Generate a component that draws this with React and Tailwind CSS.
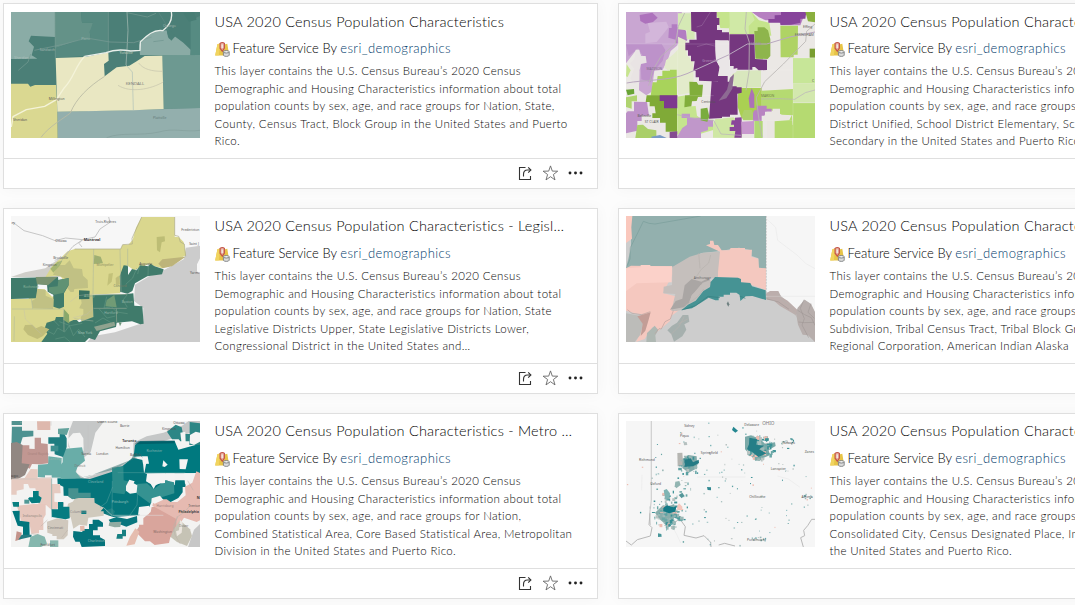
import React from "react";

const Shapes = ({ items }) => items.map(([fill, points], i) => <polygon key={i} fill={fill} points={points} />);

const Lines = ({ items }) =>
  items.map(([stroke, width, d], i) => <path key={i} d={d} fill="none" stroke={stroke} strokeWidth={width} strokeLinejoin="round" />);

const Labels = ({ items }) =>
  items.map(([x, y, text, fill = "#555", size = 10, weight = 400], i) => (
    <text key={i} x={x} y={y} fill={fill} fontSize={size} fontWeight={weight} textAnchor="middle" fontFamily="Noto Sans, sans-serif">
      {text}
    </text>
  ));

const Thumb = ({ top = 33, children }) => (
  <svg className="block h-[126px] w-[189px] shrink-0" viewBox={`33 ${top} 567 378`} preserveAspectRatio="none">
    {children}
  </svg>
);

const CountyMap = () => (
  <Thumb top={36}>
    <rect x="33" y="36" width="567" height="378" fill="#4b7f77" />
    <Shapes
      items={[
        ["#8aaca6", "33,36 165,36 165,111 93,107 86,124 102,140 95,166 112,176 33,177"],
        ["#649288", "165,36 243,36 246,68 279,68 276,86 269,95 272,115 240,119 165,145"],
        ["#568980", "243,36 325,36 325,155 255,168 165,173 165,145 240,119 272,115 269,95 279,68 246,68"],
        ["#8aaba5", "420,165 418,134 440,107 467,96 500,91 507,116 523,108 550,128 572,149 571,168"],
        ["#6d9991", "487,166 600,165 600,325 491,327"],
        ["#568b82", "572,60 600,50 600,165 572,165"],
        ["#93afad", "172,335 400,330 600,324 600,414 173,414"],
        ["#dad891", "33,251 84,251 91,260 105,255 168,255 172,334 173,414 33,414"],
        ["#e9e7c2", "167,174 255,171 325,157 326,182 312,192 314,229 350,202 388,197 410,184 434,168 487,167 491,327 400,331 172,335"],
      ]}
    />
    <Lines
      items={[
        ["#adc0b8", 2, "M381 36 L384 91 L381 149 L378 195 L397 216 L400 330"],
        ["#7a9c96", 2, "M103 151 L190 133 L260 114 L330 126 L401 128 L455 111"],
        ["#759c93", 2, "M381 38 L442 51 L468 40 M325 36 L325 156 M165 36 L166 174 M55 211 L84 186 L92 162"],
        ["#b8b9a3", 2.5, "M314 229 C265 260 228 296 211 339 C190 356 147 379 123 412"],
        ["#c4c2ac", 2, "M416 189 C430 208 455 214 488 214 M354 256 C390 279 450 269 490 246"],
        ["#839f9c", 2, "M320 413 C365 395 420 409 477 396 C520 383 552 397 600 391"],
        ["#e9efea", 4, "M514 36 C518 58 507 78 488 92 C460 88 440 107 421 126 L420 151 L392 153 C360 147 335 151 318 158 L254 169"],
        ["#f4f3d9", 4, "M254 169 C227 196 220 237 193 263 L169 299 L134 319 L79 329 L39 350 L34 381"],
        ["#658c86", 1.5, "M476 37 L495 68 L506 96 M460 125 L491 121 M573 62 L600 49"],
      ]}
    />
    <polygon points="500,91 513,94 526,109 514,122 504,111" fill="#4b7f77" />
    <polygon points="550,40 582,37 590,59 567,65" fill="#477d74" />
    <Labels items={[[142, 153, "Sandwich", "#a2b7b1"], [64, 176, "Sheridan", "#b2c2bd"], [257, 121, "Plano", "#9bb4ad"], [378, 163, "Yorkville", "#c6d0bf"], [508, 82, "Oswego", "#a2b7b1"], [405, 254, "KENDALL", "#777", 13], [170, 300, "Millington"], [60, 363, "Sheridan"], [479, 358, "Plattville", "#647b78"]]} />
  </Thumb>
);

const SchoolMap = () => (
  <Thumb top={36}>
    <rect x="33" y="36" width="567" height="378" fill="#ebe8e5" />
    <Shapes
      items={[
        ["#c9a6d2", "33,36 200,36 206,65 190,80 188,135 167,153 159,178 143,209 118,212 110,275 94,286 72,271 73,213 62,192 78,165 63,151 33,190"],
        ["#bd92ca", "33,132 140,132 151,150 143,182 117,213 107,247 79,238 77,192 88,175 69,145 41,169"],
        ["#d3b6da", "98,69 154,65 161,81 143,104 125,126 91,130 91,101 105,95"],
        ["#e9e4e4", "62,149 73,149 77,168 92,168 95,188 78,192 73,213 73,248 58,252 46,235 58,206 45,191 58,176"],
        ["#ad72bc", "74,45 112,38 128,53 114,66 91,71 76,63"],
        ["#b27dc2", "162,84 170,84 170,73 187,73 187,82 204,82 213,93 217,120 203,132 182,130 182,119 160,113"],
        ["#e3ebcb", "189,110 212,121 215,165 234,184 236,241 225,278 190,285 185,229 148,203 153,181 176,162 190,148"],
        ["#d5e9b5", "189,40 230,40 230,92 239,92 239,118 215,118 215,91 189,88"],
        ["#c5e48c", "303,36 409,36 432,61 463,68 469,107 420,103 343,103 342,85 316,84"],
        ["#d0e9a6", "343,36 409,36 419,60 401,78 402,102 345,100"],
        ["#b67fc1", "410,36 600,36 569,43 556,76 497,76 491,59 452,61 432,52"],
        ["#87449b", "498,36 574,36 571,56 556,56 556,68 528,74 497,75 496,68 460,68 460,57 479,57 479,46 498,45"],
        ["#afd364", "496,77 549,77 548,164 536,164 536,172 497,172"],
        ["#8aaf3e", "571,36 600,36 600,67 579,64"],
        ["#c7e698", "534,174 600,174 600,250 534,250"],
        ["#d3e8ae", "534,250 600,250 600,308 534,308"],
        ["#b5da71", "440,272 534,267 534,346 501,344 467,330 440,325"],
        ["#b5da71", "534,309 600,309 600,375 534,375"],
        ["#d9e7be", "350,213 438,211 438,262 357,264"],
        ["#aad052", "370,264 440,264 440,329 406,356 379,353 368,321"],
        ["#c7e58f", "35,193 47,211 38,231 33,229"],
        ["#a8d35b", "128,228 142,228 142,212 165,212 165,209 185,209 186,286 107,287 113,247 125,247"],
        ["#80aa37", "95,286 187,286 186,395 152,395 152,368 135,368 135,354 112,354 112,340 122,340 119,319 104,319 104,306 92,306"],
        ["#c5e58e", "187,290 211,286 211,320 242,318 246,347 265,361 295,359 295,390 232,409 186,403"],
        ["#81ae3b", "223,245 245,246 250,254 264,254 261,290 249,291 245,303 231,304 229,319 208,322 210,286 224,285"],
        ["#c097ca", "200,341 225,341 225,353 265,353 265,359 294,361 294,380 279,380 279,391 258,397 258,414 184,414 202,384 216,374 216,354 200,354"],
        ["#7d398e", "134,286 187,286 187,325 147,325 147,303 134,303"],
        ["#bd91c8", "38,334 57,334 57,305 96,306 102,347 80,347 80,363 67,363 67,392 33,400 33,340"],
        ["#69a435", "33,269 57,267 58,281 38,286"],
        ["#b0d470", "33,292 66,286 66,304 50,304 50,326 33,321"],
        ["#aacf68", "67,375 84,374 99,387 124,391 124,414 61,414"],
        ["#cfe7a4", "300,358 356,352 381,378 380,414 294,413 294,375"],
        ["#75377f", "228,36 305,36 305,54 313,54 313,75 306,75 306,90 321,90 321,97 342,97 343,120 333,126 301,120 301,150 303,180 314,201 309,226 309,244 290,244 252,242 252,232 242,232 242,213 235,213 239,184 228,184 228,167 219,167 219,151 211,151 211,128 223,128 223,119 245,119 244,97 229,92"],
        ["#75377f", "343,103 418,103 420,177 456,179 456,210 431,211 420,201 412,201 412,209 367,209 367,204 345,209 343,157"],
        ["#75377f", "290,243 309,244 309,228 338,228 338,245 351,245 351,259 365,259 365,262 380,262 380,278 367,281 368,344 345,344 345,350 321,350 321,354 282,356 286,300"],
        ["#eae6e7", "301,121 339,121 342,149 336,171 345,181 345,198 356,198 356,210 364,210 364,216 342,227 313,226 314,201 303,180"],
        ["#8a469a", "350,361 360,361 360,353 380,352 380,413 358,413 361,393 344,393 344,381 357,381 357,374 348,374"],
        ["#8eb54c", "418,93 428,93 428,82 448,82 459,91 466,117 466,168 458,177 421,176"],
        ["#7aac3d", "257,326 277,323 283,350 277,365 257,361"],
        ["#ac71b7", "410,265 418,284 418,324 404,323 401,295"],
        ["#b883c1", "418,331 425,331 425,317 455,317 455,326 470,326 470,335 450,335 450,347 440,347 440,365 414,362 410,347"],
        ["#eae6e2", "449,345 455,335 473,335 473,326 495,326 495,345 522,346 522,362 479,362 479,414 456,414 456,364 443,363"],
        ["#b5da71", "479,364 523,360 531,344 533,375 600,375 600,414 479,414"],
        ["#b1d875", "418,363 443,363 443,414 418,414"],
        ["#c898ce", "379,365 417,363 417,402 381,402"],
        ["#aed06c", "387,330 410,330 414,338 414,361 385,361 379,350"],
        ["#7a9ac5", "109,410 135,405 155,414 110,414"],
        ["#844a91", "164,396 187,394 187,414 164,414"],
        ["#799e30", "584,146 600,146 600,173 584,173"],
      ]}
    />
    <Lines
      items={[
        ["#b9a8bf", 3, "M35 249 C86 239 165 243 216 221 L340 165 L397 132 L455 132 L524 111 L600 96"],
        ["#b9b6b3", 2.5, "M394 36 L390 87 L403 127 L402 215 L393 271 M601 71 L575 94 L572 124 L505 192 L449 245 L424 293 L430 345 L441 411 M209 39 L190 79 L181 131 L138 169 L112 213 L101 257"],
        ["#baafbc", 2, "M438 297 L491 296 L539 298 L571 278 L600 270 M186 344 L247 357 L296 361 L318 402 L378 406"],
        ["#ffffff70", 1, "M188 36 V414 M343 80 V210 M33 132 H343 M186 287 H296 M534 174 H600 M457 210 H534 M534 251 V414 M534 309 H600 M381 361 H534 M246 140 L274 132 L303 139 M286 36 L261 76 L245 81"],
      ]}
    />
    <path d="M357 222 L345 233 L336 269 L311 302 L334 295 L352 266 Z" fill="#8d6a93" />
    <Labels items={[[118, 211, "MADISON", "#806b86"], [285, 186, "Greenville", "#b395bb"], [422, 136, "SALEM", "#a18fab"], [280, 310, "Centralia"], [458, 291, "MARION", "#718149"], [110, 370, "ST CLAIR"], [88, 352, "Belleville"], [568, 107, "EFFINGHAM", "#666", 10], [578, 83, "Effing"], [594, 245, "C"]]} />
  </Thumb>
);

const NewEnglandMap = () => (
  <Thumb>
    <rect x="33" y="33" width="567" height="378" fill="#f7f7f7" />
    <Shapes
      items={[
        ["#cccccc", "558,128 600,122 600,160 591,178 591,199 600,208 600,411 262,411 277,394 345,382 428,354 430,309 402,288 405,239 449,213 494,194 552,162"],
        ["#d0cfca", "33,216 75,202 136,190 175,163 190,171 187,214 175,216"],
        ["#dad78e", "33,281 85,282 112,252 134,253 156,275 192,262 202,240 179,211 136,217 155,185 203,139 224,132 362,132 368,119 385,119 398,105 408,68 425,36 524,36 524,95 537,97 551,111 558,151 486,190 445,178 402,196 381,181 370,190 360,238 361,265 276,269 281,349 238,343 193,369 132,411 33,411"],
        ["#c1c184", "159,209 175,180 195,180 209,166 221,190 246,192 249,212 263,225 264,249 223,252 219,269 199,246 202,223 180,214"],
        ["#c1c184", "234,271 282,269 280,342 244,349 239,319"],
        ["#407b6b", "33,219 174,216 175,225 206,219 206,241 192,265 192,305 178,311 160,305 160,269 143,260 141,239 113,238 110,280 33,282"],
        ["#c1c184", "112,251 137,255 137,272 161,282 159,312 98,310 95,288 107,281"],
        ["#407b6b", "360,238 359,213 371,181 384,182 384,210 396,192 410,196 421,181 445,184 451,176 464,184 491,193 486,208 442,214 405,235 397,258 382,266 360,260"],
        ["#407b6b", "278,270 381,267 400,265 403,302 427,304 431,356 421,358 396,349 350,353 348,366 300,379 285,405 267,399 255,411 124,411 142,386 133,373 140,353 165,346 168,336 191,336 207,351 227,342 237,352 280,336"],
        ["#5f9274", "175,225 205,220 205,241 191,263 163,269 147,260 147,247 173,244"],
        ["#dad78e", "195,271 203,261 240,261 245,295 237,310 250,312 250,328 234,345 215,345 207,326 195,321"],
        ["#c0bd7a", "70,373 75,360 97,359 108,370 124,363 148,373 129,393 112,402 84,390"],
        ["#89a86b", "192,313 207,329 208,356 190,344"],
        ["#9faf72", "283,150 302,155 309,175 281,177"],
        ["#bdbd75", "470,96 494,94 495,109 485,112 480,142 471,136"],
        ["#bdb47a", "487,163 557,155 516,184 488,190 475,176"],
        ["#a6b572", "151,191 172,171 187,167 179,182 160,203"],
        ["#7a9270", "107,216 173,215 144,241 111,237"],
        ["#387061", "237,256 269,257 268,282 237,283"],
        ["#719b75", "320,285 343,270 350,307 316,304"],
        ["#8fa38f", "282,365 343,350 346,362 290,378"],
        ["#699276", "356,351 365,353 360,364"],
        ["#c3c179", "326,206 339,204 335,230 322,242"],
        ["#c0bd7a", "347,219 356,212 360,238 348,242"],
      ]}
    />
    <Lines
      items={[
        ["#a9b59f", 1.5, "M279 267 L281 132 M276 270 L381 268 M281 310 H380 M349 311 L350 352 M36 312 H191 L192 380 M43 334 L42 408 M360 133 L363 262 M383 131 V185 M205 140 L173 182 M94 281 L98 311 M280 348 L223 341"],
        ["#bcbcbc", 2.5, "M39 52 L72 77 L128 92 L165 107 L197 99 L248 104 M326 36 L330 52 L300 72 L285 96 L248 104 L219 124 L191 157 L164 166 M248 104 L237 115 L246 126"],
        ["#6b9c89", 1.5, "M144 379 L162 388 L173 369 L194 381 L208 362 L220 392 L236 373 L255 396 M178 350 L211 362 L247 355 M285 354 L309 339 L338 356 M320 275 L312 309 L331 306 M329 300 L350 321 L383 326 M385 265 L369 285 L382 307 M166 402 L193 396 L211 411 M410 190 L398 219 L377 238 M420 178 L413 207 M445 178 L444 212 M178 363 L163 348 M297 311 L321 339 L346 333"],
        ["#bebdb5", 1, "M72 313 L76 342 L125 388 M280 310 L260 328 L219 338 M278 267 L234 272 L211 290"],
      ]}
    />
    <path d="M224 132 H362 L368 119 L397 117 L396 100 L425 36 M524 36 V91 L536 94 L541 111 L553 117 L557 154" fill="none" stroke="#aaa985" strokeWidth="2" />
    <Labels items={[[317, 55, "Trois-Rivières"], [183, 112, "Ottawa"], [276, 107, "Montreal", "#333", 11, 700], [182, 162, "Brockville"], [149, 184, "Kingston"], [315, 183, "Montpelier", "#8c8c62"], [360, 245, "Concord", "#777c66"], [437, 179, "Augusta"], [571, 78, "Fredericton"], [582, 121, "Saint J"], [585, 207, "Yarmo"], [93, 248, "Rochester", "#8db49c"], [268, 277, "Albany", "#8eb398"], [382, 293, "Boston", "#9dbaad"], [333, 327, "Hartford", "#94b6a8"], [255, 388, "New York", "#a1c0b4"], [40, 58, "ey"]]} />
  </Thumb>
);

const AlaskaMap = () => (
  <Thumb>
    <rect x="33" y="33" width="567" height="378" fill="#cdcdcd" />
    <Shapes
      items={[
        ["#f6f6f6", "454,33 600,33 600,323 588,297 568,284 545,316 491,266 454,262"],
        ["#93b0ae", "48,33 453,33 453,192 430,190 430,160 410,153 409,136 372,128 317,138 260,144 189,178 171,188 33,190 48,129"],
        ["#f5c8bf", "33,190 48,182 172,184 173,208 144,264 190,276 190,317 170,332 165,348 131,377 113,366 89,402 63,411 80,375 98,331 60,325 33,317"],
        ["#fbd1c9", "33,190 77,187 77,180 106,180 106,184 171,184 170,232 65,235 33,259"],
        ["#fac8bd", "33,33 52,33 49,67 51,101 33,114"],
        ["#f4c8bf", "273,121 285,117 285,107 295,107 298,120 309,120 320,136 343,136 347,129 390,129 390,134 411,134 409,155 430,161 432,188 453,190 453,255 404,238 375,230 370,218 303,217 309,202 308,154 315,140"],
        ["#c5bfbc", "172,186 224,155 265,143 315,140 309,201 309,216 284,221 282,242 262,258 238,293 207,313 185,318 169,318 181,267 145,265 146,245 171,240"],
        ["#aaa6a4", "230,222 259,230 282,218 288,235 257,240 229,273 225,292 206,307 165,314 182,288 202,281 209,241"],
        ["#c3bdba", "263,233 286,225 287,244 261,260 235,292 220,298 231,269 244,259"],
        ["#469394", "200,315 219,299 242,287 265,258 285,246 287,231 300,216 369,218 378,222 378,232 406,234 411,244 452,256 453,285 412,273 392,274 376,288 374,270 364,263 345,263 345,269 326,269 326,275 311,275 311,286 301,286 281,278 260,292 231,310"],
        ["#bcaeac", "454,265 465,258 490,258 499,276 518,287 550,317 543,331 494,302 477,287 455,284"],
        ["#b7aeac", "543,324 548,308 569,284 588,297 600,321 600,411 579,391 563,389 549,359"],
        ["#a6b0ae", "157,376 171,362 186,353 203,330 220,330 223,350 208,358 214,374 202,394 177,410 169,388"],
        ["#bcbcb9", "33,325 78,333 84,355 76,389 59,411 33,411"],
        ["#c39d96", "67,334 107,322 99,351 91,377 77,393 83,356"],
        ["#afb8b3", "96,384 119,362 130,375 121,391 123,411 94,411"],
        ["#6e8080", "335,296 339,289 343,298 340,305"],
      ]}
    />
    <Lines
      items={[
        ["#789d9a", 2, "M37 182 L45 162 L46 128 L70 80 L85 49 L102 55 L120 57 L189 45 L257 33"],
        ["#b7b2ae", 2, "M287 150 L281 174 L258 194 L240 221 M251 144 L255 190 M212 300 L223 293 L250 274 L266 252 M208 334 L192 365 L168 388 M218 342 L188 358 M485 261 L501 286 L527 303 L541 329 L557 347 L597 353"],
        ["#9b9391", 1.5, "M548 316 L569 329 L589 338 L600 361 M567 284 L556 310 L568 341 L561 360 L581 398 M588 296 L579 322 L598 340 M550 351 L568 353 L597 352 M454 281 L491 291 L522 313"],
        ["#dfdfdf", 1, "M454 41 L468 54 L482 67 L488 106 L509 122 L546 150 L573 176 L600 191 M454 274 H600"],
        ["#357f80", 2, "M200 315 L242 302 L279 274 L315 278 M374 273 L391 280"],
        ["#b9a39e", 2, "M37 314 L51 325 L80 329 L106 320 M175 317 L166 342 L150 350 L139 372 L132 371 L120 386"],
      ]}
    />
    <path d="M454 33V282" stroke="#999" strokeWidth="1" strokeDasharray="5 4" />
    <Labels items={[[262, 222, "Anchorage", "#666"]]} />
  </Thumb>
);

const MetroMap = () => (
  <Thumb>
    <rect x="33" y="33" width="567" height="378" fill="#f3f3f2" />
    <Shapes
      items={[
        ["#c5c7c7", "219,33 313,33 286,68 272,127 251,143 230,168 229,189 253,205 330,178 400,150 400,98 440,79 490,68 546,47 566,33 600,33 600,60 528,82 453,105 405,127 412,152 351,183 267,214 231,212 215,187 237,138 205,110 206,67"],
        ["#f3f3f2", "203,88 219,70 240,68 250,85 251,122 211,120"],
        ["#c7c7c7", "582,359 600,342 600,411 564,411"],
        ["#00797f", "405,105 420,94 524,93 535,119 600,101 600,189 433,190 439,158 424,139 401,140"],
        ["#05757b", "172,205 240,205 270,207 353,180 398,143 428,150 432,188 456,198 440,213 464,227 500,210 524,226 526,211 555,211 557,231 548,231 548,247 535,264 512,276 454,276 448,291 422,291 418,316 339,321 292,304 292,289 270,279 213,265 210,258 191,257 190,230 173,222"],
        ["#2b8b8a", "336,173 370,168 371,211 389,215 373,253 338,248"],
        ["#359291", "410,222 441,220 461,238 496,211 522,217 523,250 475,265 449,280 410,251"],
        ["#2c8685", "501,65 527,44 545,52 549,72 569,72 569,36 600,40 600,105 568,105 568,94 541,94 536,88 516,88"],
        ["#69ada8", "188,117 246,112 255,152 233,170 227,185 243,205 183,207 175,174 188,157"],
        ["#69ada8", "114,164 144,162 145,139 185,144 183,203 155,203 155,196 135,196 135,203 113,201"],
        ["#1d7d80", "145,82 179,82 179,70 192,70 200,85 200,111 189,141 164,133 163,101 145,101"],
        ["#4d9291", "36,50 66,50 66,62 100,62 100,79 68,82 55,124 34,116"],
        ["#c19792", "60,106 88,106 88,116 104,117 104,83 123,83 123,100 143,102 145,160 120,163 96,162 89,176 56,159 58,130"],
        ["#918782", "33,99 50,96 68,105 65,160 89,163 75,195 53,208 33,209"],
        ["#deb8ad", "111,34 151,34 151,60 112,60"],
        ["#e6cbc1", "92,177 113,178 113,204 155,202 155,222 180,222 182,250 163,250 163,275 192,279 189,290 156,301 138,285 116,284 106,235 89,235 84,222 71,222 71,238 50,242 50,254 34,254 34,207 74,204"],
        ["#e6c7bd", "50,287 101,282 137,282 137,314 130,326 130,360 117,360 117,370 94,371 89,343 63,332 56,304"],
        ["#d0cabd", "204,281 218,275 227,263 283,264 284,278 311,293 302,304 311,304 311,317 265,323 261,347 238,344 220,356 212,321 196,329"],
        ["#d0c8bd", "141,335 172,325 205,331 203,376 191,388 170,388 170,378 157,378 157,373 142,368"],
        ["#057c81", "155,298 174,298 174,276 190,276 190,290 208,290 209,325 196,328 156,321"],
        ["#057d80", "88,262 99,262 99,243 116,243 116,257 125,263 120,278 95,280 84,266"],
        ["#05747c", "220,363 247,366 247,357 267,357 267,342 278,342 278,329 296,329 309,338 309,350 293,350 293,361 279,361 279,376 300,376 300,382 315,390 315,408 245,411 239,395 226,395 219,380"],
        ["#0a767e", "326,329 349,321 381,327 411,318 412,337 379,350 363,344 337,348"],
        ["#178082", "352,372 366,372 366,359 378,359 378,379 368,379 368,386 349,386"],
        ["#00767d", "37,303 59,302 59,332 88,336 89,377 69,376 69,350 53,347"],
        ["#85b7ae", "91,381 113,372 134,380 141,401 123,411 85,411"],
        ["#8bb9b0", "150,391 175,391 175,411 150,411"],
        ["#d9a59c", "407,365 417,350 417,344 430,344 430,325 452,306 455,291 473,289 505,291 530,320 532,365 511,382 507,399 464,405 450,394 435,394"],
        ["#e6bab1", "457,287 462,268 500,268 512,276 532,276 557,256 555,230 577,218 589,184 600,189 600,331 590,336 552,323 529,358 529,327"],
        ["#c6c3b5", "520,360 540,331 570,358 576,378 561,408 531,396 512,381"],
        ["#e5bdaf", "379,407 390,380 406,355 418,365 404,403"],
        ["#c3938a", "50,364 65,368 62,388 46,393"],
        ["#247d82", "65,374 95,374 94,380 55,389"],
        ["#0a8081", "37,276 57,276 57,290 40,290"],
        ["#4f9895", "73,269 88,269 88,281 73,281"],
        ["#63a29c", "174,56 208,54 200,75 174,72"],
        ["#f4f4f3", "426,139 443,139 447,161 429,162"],
        ["#f4f4f3", "378,228 388,209 404,214 401,220 412,226 410,248 390,251 378,242"],
        ["#f4f4f3", "441,192 495,190 495,219 469,221 461,237 452,222 438,214"],
        ["#f4f4f3", "497,190 524,190 523,211 497,211"],
        ["#f4f4f3", "538,148 564,148 557,178 539,177"],
        ["#f4f4f3", "490,151 503,164 494,171 487,169"],
        ["#f4f4f3", "417,291 448,287 446,313 414,314"],
        ["#f4f4f3", "455,265 480,257 490,269 464,281 454,276"],
        ["#f4f4f3", "541,68 556,65 557,97 545,102"],
        ["#f4f4f3", "570,75 587,65 600,68 600,95 582,105 569,100"],
        ["#f4f4f3", "552,190 572,192 572,215 555,222"],
        ["#e3b9ac", "240,348 253,347 254,362 241,363"],
        ["#91aba2", "328,337 364,335 361,351 344,352 326,347"],
        ["#ece6df", "540,330 548,337 545,368 531,379 528,364 537,361"],
        ["#46918f", "205,235 235,235 235,248 272,248 272,263 240,263 218,268 205,260"],
        ["#1f8083", "318,301 335,295 345,304 340,317 321,315"],
        ["#0b7d81", "244,302 259,302 259,312 244,312"],
        ["#51928f", "35,33 66,33 66,45 35,45"],
        ["#3d9090", "152,107 175,107 175,124 152,124"],
      ]}
    />
    <Lines
      items={[
        ["#c3c3c3", 1.5, "M265 45 V115 M153 34 V47 M63 35 V40 M36 207 H113"],
        ["#56a09e", 1.5, "M337 213 L336 317 M353 188 H556 M414 240 L411 285 L388 318 M338 231 L320 277 L300 292 M155 205 V322"],
        ["#dedede", 1.5, "M339 316 H490 M310 292 L338 318 M113 204 H172"],
        ["#bbb0a8", 1.5, "M570 287 L553 307 L533 320 L520 349 L525 375 L541 402 M532 318 L520 366 M563 212 L580 241 M142 330 L122 349 M203 360 L185 383 M94 371 L112 374"],
      ]}
    />
    <polygon points="235,205 336,180 405,145 401,129 394,149 330,174 268,198" fill="#56868599" />
    <polygon points="414,93 524,91 524,100 403,103" fill="#00434f70" />
    <Labels items={[[322, 40, "Owen Sound"], [374, 51, "Barrie"], [388, 96, "Toronto", "#444", 11, 700], [368, 117, "Hamilton"], [307, 134, "London"], [407, 138, "Buffalo"], [259, 134, "Sarnia"], [463, 125, "Rochester", "#8bb5b2"], [240, 171, "Detroit", "#777"], [114, 134, "Grand Rapids", "#a9857f"], [165, 150, "Lansing", "#93b9ae"], [287, 220, "Cleveland", "#83b5b3"], [360, 280, "Pittsburgh", "#9bc0be"], [234, 308, "Columbus", "#888"], [166, 356, "Cincinnati", "#777"], [97, 320, "Indianapolis", "#94877f"], [495, 291, "Harrisburg", "#9e807b"], [566, 309, "Philadelphia", "#444", 10, 700], [488, 368, "Washington", "#876b66"], [551, 352, "Dover", "#777"], [583, 292, "Trenton"], [289, 397, "Charleston", "#99bbb8"], [143, 407, "Frankfort"], [44, 200, "ago", "#444", 12], [507, 60, "Kingston"], [537, 41, "Ottawa"], [595, 266, "N", "#333", 11, 700]]} />
  </Thumb>
);

const cluster = (cx, cy, rx, ry, count, seed, size) => {
  let state = seed;
  const next = () => {
    state = (state * 16807) % 2147483647;
    return state / 2147483647;
  };
  return Array.from({ length: count }, () => {
    const angle = next() * Math.PI * 2;
    const radius = Math.sqrt(next());
    return { x: cx + Math.cos(angle) * rx * radius, y: cy + Math.sin(angle) * ry * radius, w: 2 + next() * size, h: 2 + next() * size, tone: next() };
  });
};

const tones = ["#3a9195", "#6ba7a6", "#9bb8b6", "#b9c3c1", "#5da1a2"];
const places = [
  ...cluster(316, 222, 283, 188, 130, 381, 3),
  ...cluster(160, 305, 62, 44, 50, 99, 8),
  ...cluster(162, 320, 34, 30, 36, 91, 11),
  ...cluster(220, 160, 36, 28, 26, 118, 9),
  ...cluster(430, 112, 44, 38, 60, 213, 11),
  ...cluster(200, 225, 34, 40, 14, 31, 7),
  ...cluster(158, 262, 20, 25, 14, 38, 8),
  ...cluster(520, 98, 22, 18, 12, 39, 5),
  ...cluster(430, 386, 22, 9, 11, 49, 4),
  ...cluster(575, 260, 15, 9, 8, 59, 4),
];

const PlacesMap = () => (
  <Thumb>
    <rect x="33" y="33" width="567" height="378" fill="#f6f6f6" />
    <path d="M109 33 V270 L104 312 L106 345" fill="none" stroke="#d2d2d2" strokeWidth="4" />
    <Lines
      items={[
        ["#b8b8b8", 3, "M33 393 L49 405 L67 389 L106 378 L111 353 L102 344 L105 310 M175 341 L194 326 L211 350 L207 376 L243 384 L267 377 L287 397 L288 411 M311 405 L329 400 L360 408 M600 328 L590 328 L578 347 L566 361 L569 377 L557 383 L565 411"],
        ["#dedede", 1, "M81 194 L80 241 M175 355 L185 373 L197 399 M246 201 H392 M487 198 L520 207 L555 232"],
      ]}
    />
    <Shapes
      items={[
        ["#b6b6b2", "187,129 202,128 205,168 188,169"],
        ["#82aaa9", "203,146 220,135 245,139 247,174 221,188 202,174"],
        ["#7aa9a8", "390,80 408,76 434,86 450,101 480,97 482,108 461,120 464,136 422,153 390,118"],
        ["#88adab", "120,308 144,286 161,289 177,282 186,307 168,343 154,345 132,326"],
      ]}
    />
    {places.map((p, i) => (
      <rect key={i} x={p.x} y={p.y} width={p.w} height={p.h} fill={p.tone > 0.93 ? "#eebcb1" : tones[Math.floor(p.tone * 5)]} />
    ))}
    <Shapes
      items={[
        ["#247b85", "208,151 227,145 234,157 251,149 252,159 234,169 209,170"],
        ["#257e87", "403,83 427,88 423,103 447,107 432,118 455,130 430,141 411,125 396,117 402,103"],
        ["#a7c0bd", "426,94 438,93 440,106 428,105"],
        ["#258791", "355,50 369,62 361,68 351,60"],
        ["#137a86", "145,293 156,286 175,292 185,289 180,305 162,310 145,303"],
        ["#f4c6bc", "187,288 192,280 202,290 202,300 186,299"],
        ["#7fb4b3", "146,241 155,237 165,250 163,263 151,269"],
        ["#92b5b2", "181,215 193,213 197,225 184,235 179,229"],
        ["#54979a", "191,255 202,248 208,257 200,265"],
        ["#b5c0bf", "206,97 215,96 217,105 207,106"],
        ["#318891", "276,231 288,232 288,241 278,240"],
        ["#48969a", "129,370 139,372 140,380 129,381"],
      ]}
    />
    <Labels items={[[223, 50, "Sidney"], [208, 81, "Piqua"], [283, 132, "Springfield"], [96, 153, "Richmond"], [122, 224, "Oxford"], [410, 47, "Delaware"], [460, 46, "OHIO", "#777", 14], [522, 102, "Newark"], [490, 180, "Lancaster"], [427, 263, "Chillicothe"], [576, 264, "Athens"], [583, 128, "Zanes"], [424, 394, "Portsmouth"]]} />
  </Thumb>
);

const ServiceIcon = () => (
  <svg className="mr-[3px] h-[15px] w-[15px] shrink-0" viewBox="0 0 15 15">
    <path d="M2.4 2.2 5 1.5 10 2.2 12.3 1.7 14.2 13.6H.2Z" fill="#e7c448" />
    <path d="m2.4 2.2 2.4-.7L4 13.2.2 13.6Z" fill="#f1d45f" />
    <path d="M5.1 1.4c1.2-1 3.3-1 4.3 0v4.7L7.3 9.2 5.1 6.2Z" fill="#e9b0a1" stroke="#c4574a" strokeWidth="1.2" />
    <path d="M6.5 2.4h1.5V6H6.5z" fill="#f1e4de" />
    <path d="M8.4 10v3.2c0 1.6 5.8 1.6 5.8 0V10" fill="#dcdcdc" stroke="#7c7f82" strokeWidth=".9" />
    <ellipse cx="11.3" cy="9.8" rx="2.9" ry="1.2" fill="#fafafa" stroke="#707579" strokeWidth=".9" />
  </svg>
);

const Actions = () => (
  <div className="flex h-[30px] items-center justify-end border-t border-[#dfdfdf] pb-px pr-[14px]">
    <svg className="mr-[10px] h-[15px] w-[14px]" viewBox="0 0 14 15" fill="none" stroke="#333" strokeWidth="1.1">
      <path d="M7.5 1.5H1.5v12h11V10M5.5 10.5V8.5c0-2.9 1.4-4.5 4-4.5h3" />
      <path d="m10.2 1.4 2.7 2.6-2.7 2.6" />
    </svg>
    <svg className="mr-[9px] h-4 w-4" viewBox="0 0 16 16" fill="none" stroke="#666" strokeWidth=".9">
      <path d="m8.5 .9 1.8 5.2 5.4.1-4.3 3.3 1.6 5.4-4.5-3.2L4 14.9l1.6-5.4L1.1 6.2l5.6-.1Z" />
    </svg>
    <svg className="h-4 w-4" viewBox="0 0 16 16" fill="#222">
      <circle cx="3" cy="8" r="1.45" />
      <circle cx="8.5" cy="8" r="1.45" />
      <circle cx="14" cy="8" r="1.45" />
    </svg>
  </div>
);

const intro = ["This layer contains the U.S. Census Bureau’s 2020 Census", "Demographic and Housing Characteristics information about total"];

const cards = [
  { Map: CountyMap, title: "USA 2020 Census Population Characteristics", lines: ["population counts by sex, age, and race groups for Nation, State,", "County, Census Tract, Block Group in the United States and Puerto", "Rico."] },
  { Map: SchoolMap, title: "USA 2020 Census Population Characteristics", lines: ["population counts by sex, age, and race groups for School", "District Unified, School District Elementary, School District", "Secondary in the United States and Puerto Rico."] },
  { Map: NewEnglandMap, title: "USA 2020 Census Population Characteristics - Legisl…", lines: ["population counts by sex, age, and race groups for Nation, State", "Legislative Districts Upper, State Legislative Districts Lower,", "Congressional District in the United States and…"] },
  { Map: AlaskaMap, title: "USA 2020 Census Population Characteristics", lines: ["population counts by sex, age, and race groups for", "Subdivision, Tribal Census Tract, Tribal Block Group,", "Regional Corporation, American Indian Alaska"] },
  { Map: MetroMap, title: "USA 2020 Census Population Characteristics - Metro …", lines: ["population counts by sex, age, and race groups for Nation,", "Combined Statistical Area, Core Based Statistical Area, Metropolitan", "Division in the United States and Puerto Rico."] },
  { Map: PlacesMap, title: "USA 2020 Census Population Characteristics", lines: ["population counts by sex, age, and race groups for", "Consolidated City, Census Designated Place, Incorporated", "the United States and Puerto Rico."] },
];

const Card = ({ card, first }) => (
  <article className="flex h-[186px] flex-col border border-[#dfdfdf] bg-white shadow-[0_0_14px_rgba(0,0,0,0.035)]">
    <div className={first ? "flex min-h-0 flex-1 pl-[7px] pt-2" : "flex min-h-0 flex-1 pl-[7px] pt-[7px]"}>
      <card.Map />
      <div className="ml-[14.5px] min-w-0 whitespace-nowrap font-light">
        <h3 className="h-5 text-[14.5px] leading-5 tracking-[0.22px] text-[#050505]">{card.title}</h3>
        <div className={first ? "mt-2 flex h-[18px] items-center text-[13px] text-black" : "mt-[9px] flex h-[18px] items-center text-[13px] text-black"}>
          <ServiceIcon />
          <span className="whitespace-pre">Feature Service By <a className="tracking-[0.43px] text-[#003a6b]">esri_demographics</a></span>
        </div>
        <div className="mt-[4px] text-[11.5px] leading-[17.5px] tracking-[0.35px] text-[#080808]">
          {[...intro, ...card.lines].map((line) => <p key={line}>{line}</p>)}
        </div>
      </div>
    </div>
    <Actions />
  </article>
);

export default function App() {
  return (
    <main className="h-[605px] w-[1075px] overflow-hidden bg-[#fcfcfc] pl-[3px] pt-[3px] font-['Lato',sans-serif]">
      <div className="grid w-[1210px] grid-cols-[595px_595px] gap-x-5 gap-y-[19px]">
        {cards.map((card, i) => <Card key={i} card={card} first={i < 2} />)}
      </div>
    </main>
  );
}
